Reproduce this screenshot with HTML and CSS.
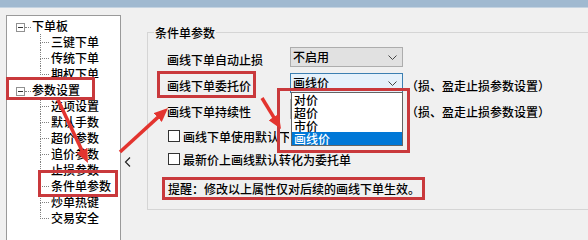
FILE: index.html
```html
<!DOCTYPE html>
<html lang="zh-CN">
<head>
  <meta charset="UTF-8" />
  <title>条件单参数</title>
  <link rel="stylesheet" href="styles.css">
</head>
<body>
  <div class="topbar"></div>
  <div class="main">
    <div class="tree">
      <ul class="roots">
        <li>
          <div class="node"><span class="toggle"></span><span class="dots"></span>下单板</div>
          <ul class="kids">
            <li>三键下单</li>
            <li>传统下单</li>
            <li>期权下单</li>
          </ul>
        </li>
        <li>
          <div class="node"><span class="toggle"></span><span class="dots"></span>参数设置</div>
          <ul class="kids">
            <li>选项设置</li>
            <li>默认手数</li>
            <li>超价参数</li>
            <li>追价参数</li>
            <li>止损参数</li>
            <li>条件单参数</li>
            <li>炒单热键</li>
            <li>交易安全</li>
          </ul>
        </li>
      </ul>
    </div>

    <div class="splitter">
      <svg width="7" height="10" viewBox="0 0 7 10"><polyline points="6,0.5 1.5,5 6,9.5" fill="none" stroke="#222" stroke-width="1.2"/></svg>
    </div>

    <div class="group">
      <div class="group-title">条件单参数</div>
      <div class="form">
        <div class="row">
          <span class="label">画线下单自动止损</span>
          <div class="combo"><span>不启用</span><svg class="chev" width="9" height="5" viewBox="0 0 9 5"><polyline points="0.5,0.5 4.5,4.5 8.5,0.5" fill="none" stroke="#444" stroke-width="1"/></svg></div>
        </div>
        <div class="row">
          <span class="label">画线下单委托价</span>
          <div class="combo focus"><span>画线价</span><svg class="chev" width="9" height="5" viewBox="0 0 9 5"><polyline points="0.5,0.5 4.5,4.5 8.5,0.5" fill="none" stroke="#444" stroke-width="1"/></svg>
            <ul class="dropdown">
              <li>对价</li>
              <li>超价</li>
              <li>市价</li>
              <li class="selected">画线价</li>
            </ul>
          </div>
          <span class="hint">（损、盈走止损参数设置）</span>
        </div>
        <div class="row">
          <span class="label">画线下单持续性</span>
          <div class="combo"></div>
          <span class="hint">（损、盈走止损参数设置）</span>
        </div>
        <div class="check first">
          <span class="box"></span><span class="clip">画线下单使用默认下单手数</span>
        </div>
        <div class="check">
          <span class="box"></span>最新价上画线默认转化为委托单
        </div>
        <div class="notice">提醒：修改以上属性仅对后续的画线下单生效。</div>
      </div>
    </div>
  </div>

  <svg class="marks" width="588" height="240" viewBox="0 0 588 240">
    <defs>
      <marker id="head" viewBox="0 0 14 12" refX="5" refY="6" markerWidth="14" markerHeight="12" markerUnits="userSpaceOnUse" orient="auto">
        <path d="M0,0 L14,6 L0,12 z" fill="#e3342f"/>
      </marker>
    </defs>
    <rect x="7.5" y="78.5" width="86" height="20" class="mark-box"/>
    <rect x="39.5" y="171.5" width="77" height="24" class="mark-box"/>
    <rect x="158.5" y="72.5" width="96" height="24" class="mark-box"/>
    <rect x="278.5" y="89.5" width="130" height="62" class="mark-box"/>
    <line x1="58" y1="100" x2="84.1" y2="154.9" class="arrow"/>
    <line x1="120" y1="152" x2="161.4" y2="114.1" class="arrow"/>
    <line x1="262" y1="98" x2="276.3" y2="121.3" class="arrow"/>
  </svg>
</body>
</html>
```

FILE: styles.css
```css
body {
  margin: 0;
  width: 588px;
  height: 240px;
  overflow: hidden;
  background-color: #f0f0f0;
  font-family: "Noto Sans CJK SC", "Noto Sans", sans-serif;
  font-size: 12px;
  font-weight: 500;
  color: #000;
}
ul {
  list-style: none;
  margin: 0;
  padding: 0;
}
.topbar {
  height: 7px;
  background-color: #a0b9d0;
  border-bottom: 1px solid #c4d3e1;
}
.main {
  display: flex;
  padding-top: 7px;
  height: 225px;
}

/* tree */
.tree {
  box-sizing: border-box;
  width: 115px;
  height: 240px;
  margin-left: 6px;
  padding-top: 2px;
  background-color: #fff;
  border: 1px solid #9a9a9a;
  flex-shrink: 0;
}
.node {
  height: 16px;
  line-height: 16px;
  padding-left: 9px;
  white-space: nowrap;
}
.toggle {
  display: inline-block;
  box-sizing: border-box;
  width: 9px;
  height: 9px;
  border: 1px solid #919191;
  vertical-align: -1px;
  position: relative;
}
.toggle::after {
  content: "";
  position: absolute;
  left: 1px;
  top: 3px;
  width: 5px;
  height: 1px;
  background-color: #333;
}
.dots {
  display: inline-block;
  width: 6px;
  margin-right: 1px;
  border-top: 1px dotted #808080;
  vertical-align: 3px;
}
.kids {
  padding-left: 33px;
}
.kids li {
  position: relative;
  height: 16px;
  line-height: 16px;
  padding-left: 11px;
  white-space: nowrap;
}
.kids li::before {
  content: "";
  position: absolute;
  left: 0;
  top: 0;
  width: 8px;
  height: 8px;
  border-left: 1px dotted #808080;
  border-bottom: 1px dotted #808080;
}
.kids li:not(:last-child)::after {
  content: "";
  position: absolute;
  left: 0;
  top: 9px;
  bottom: 0;
  border-left: 1px dotted #808080;
}

/* splitter */
.splitter {
  width: 26px;
  flex-shrink: 0;
  padding-top: 138px;
  padding-left: 3px;
  box-sizing: border-box;
}

/* group box */
.group {
  box-sizing: border-box;
  width: 470px;
  height: 178px;
  margin-top: 17px;
  border: 1px solid #d5d5d5;
  flex-shrink: 0;
}
.group-title {
  width: fit-content;
  margin: -7px 0 0 6px;
  padding: 0 1px;
  line-height: 14px;
  background-color: #f0f0f0;
}
.form {
  margin-top: 7px;
  padding-left: 19px;
}
.row {
  display: flex;
  align-items: center;
  height: 20px;
  margin-bottom: 6px;
  white-space: nowrap;
}
.label {
  width: 123px;
  padding-top: 5px;
}
.hint {
  margin-left: 3px;
  padding-top: 4px;
}
.combo {
  position: relative;
  box-sizing: border-box;
  display: flex;
  align-items: center;
  justify-content: space-between;
  width: 113px;
  height: 20px;
  padding: 0 5px 0 2px;
  line-height: 18px;
  background-color: #e1e1e1;
  border: 1px solid #adadad;
}
.combo.focus {
  background-color: #e5f1fb;
  border-color: #3c7fb1;
}
.dropdown {
  position: absolute;
  top: 100%;
  left: 0;
  z-index: 5;
  box-sizing: border-box;
  width: 112px;
  background-color: #fff;
  border: 1px solid #646464;
}
.dropdown li {
  height: 13px;
  line-height: 13px;
  padding-left: 2px;
}
.dropdown .selected {
  background-color: #0078d7;
  color: #fff;
}
.check {
  display: flex;
  align-items: center;
  height: 16px;
  margin-top: 7px;
  white-space: nowrap;
}
.check.first {
  margin-top: 9px;
}
.clip {
  max-width: 106px;
  overflow: hidden;
}
.box {
  box-sizing: border-box;
  width: 12px;
  height: 12px;
  margin: 0 3px 0 1px;
  background-color: #fff;
  border: 1px solid #333;
}
.notice {
  width: fit-content;
  margin: 10px 0 0 -5px;
  padding: 0 2px 0 3px;
  line-height: 17px;
  border: 3px solid #c9393c;
  white-space: nowrap;
}

/* annotations */
.marks {
  position: absolute;
  left: 0;
  top: 0;
  z-index: 10;
  pointer-events: none;
}
.mark-box {
  fill: none;
  stroke: #c9393c;
  stroke-width: 3;
}
.arrow {
  stroke: #e3342f;
  stroke-width: 3.5;
  marker-end: url(#head);
}
```
